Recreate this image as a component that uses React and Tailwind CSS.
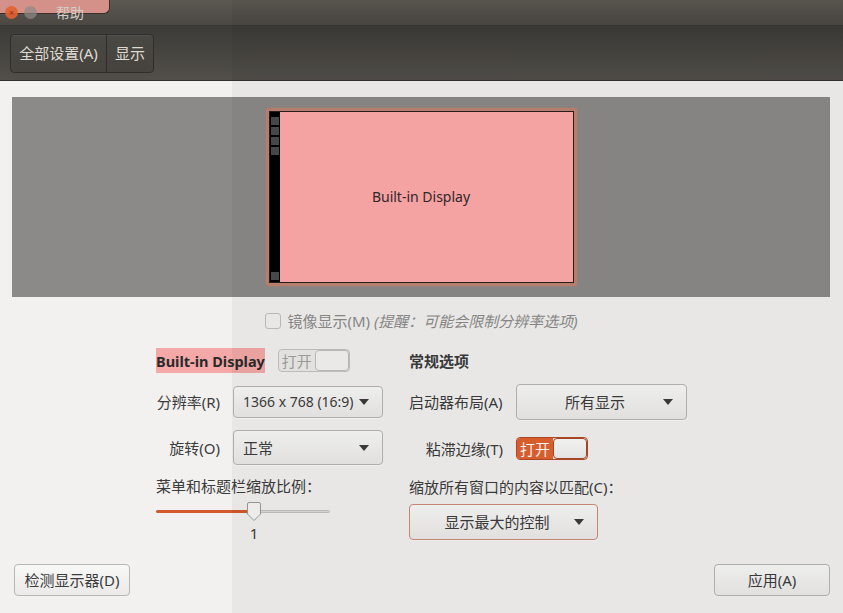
const font = "font-['Noto_Sans','Noto_Sans_CJK_SC',sans-serif]";

function Arrow() {
  return (
    <svg width="10" height="6" viewBox="0 0 10 6" className="shrink-0">
      <path d="M0 0 L10 0 L5 6 Z" fill="#3c3c3c" />
    </svg>
  );
}

function Dropdown({ text, w, h, center, focus, small }) {
  return (
    <div
      className={`flex items-center rounded-[4px] border bg-gradient-to-b from-[#f8f8f7] to-[#ebeae8] text-[#3c3c3c] shadow-[0_1px_0_rgba(255,255,255,0.6)] ${
        small ? "text-[14px]" : "text-[15px]"
      } ${focus ? "border-[#cf8a78]" : "border-[#b8b6b1]"} ${w} ${h}`}
    >
      <span className={center ? "flex-1 text-center pl-[10px]" : "flex-1 pl-[9px]"}>{text}</span>
      <span className="pr-[13px]">
        <Arrow />
      </span>
    </div>
  );
}

function Switch({ on }) {
  if (on) {
    return (
      <div className="flex h-[23px] w-[72px] overflow-hidden rounded-[4px] border border-[#b24a24]">
        <div className="flex w-[36px] items-center justify-center bg-[#e0612f] text-[15px] text-white">打开</div>
        <div className="flex-1 rounded-[4px] border border-[#a5482a] bg-gradient-to-b from-[#fbfbfa] to-[#eeedeb]" />
      </div>
    );
  }
  return (
    <div className="flex h-[23px] w-[72px] overflow-hidden rounded-[4px] border border-[#c4c2be] bg-[#ecebe9]">
      <div className="flex w-[36px] items-center justify-center text-[15px] text-[#a3a19d]">打开</div>
      <div className="flex-1 rounded-[4px] border border-[#c0beba] bg-[#f4f3f2]" />
    </div>
  );
}

export default function App() {
  return (
    <div className={`relative h-[613px] w-[843px] overflow-hidden bg-[#f2f1f0] ${font}`}>
      {/* title bar */}
      <div className="relative h-[25px] bg-gradient-to-b from-[#5c5852] to-[#4b4843]">
        <div className="absolute left-0 top-0 h-[14px] w-[110px] rounded-br-[6px] border-b border-r border-[#3a2f2c] bg-[#d4918a]" />
        <div className="relative flex items-center gap-[6px] pl-[5px] pt-[4px]">
          <div className="flex h-[13px] w-[13px] items-center justify-center rounded-full bg-[#e4602f]/90 text-[9px] leading-none text-[#8a3418]">×</div>
          <div className="flex h-[13px] w-[13px] items-center justify-center rounded-full bg-[#8f8a86]/70 text-[9px] leading-none text-[#6a6662]">–</div>
          <span className="ml-[13px] mt-[2px] text-[14px] leading-none text-[#d3cdc6]">帮助</span>
        </div>
      </div>

      {/* toolbar */}
      <div className="flex h-[56px] items-center border-b border-t border-b-[#33312e] border-t-[#3a3834] bg-gradient-to-b from-[#3d3b37] to-[#524f4a] px-[10px]">
        <div className="flex h-[39px] overflow-hidden rounded-[4px] border border-[#302e2b] bg-gradient-to-b from-[#4a4843] to-[#46433f] text-[15px] text-[#dfdbd2] shadow-[inset_0_1px_0_rgba(255,255,255,0.06)]">
          <div className="flex w-[96px] items-center justify-center border-r border-[#2f2d2a]">全部设置(A)</div>
          <div className="flex w-[46px] items-center justify-center">显示</div>
        </div>
      </div>

      {/* preview */}
      <div className="px-[12px] pt-[16px]">
        <div className="flex h-[200px] w-[818px] items-center justify-center bg-[#8b8a89]">
          <div className="rounded-[2px] bg-[#bd8370] p-[3px] shadow-[0_0_2px_#bd8370]">
            <div className="relative flex h-[172px] w-[305px] border border-[#2a1e1e] bg-[#fea9a9]">
              <div className="flex w-[10px] flex-col justify-between bg-black px-[1px] pb-[2px] pt-[5px]">
                <div className="flex flex-col gap-[2px]">
                  <div className="h-[8px] bg-[#4a4a4a]" />
                  <div className="h-[8px] bg-[#4a4a4a]" />
                  <div className="h-[8px] bg-[#4a4a4a]" />
                  <div className="h-[8px] bg-[#4a4a4a]" />
                </div>
                <div className="h-[8px] bg-[#4a4a4a]" />
              </div>
              <div className="-ml-[10px] flex flex-1 items-center justify-center pb-[1px] text-[14px] text-[#35282a]">Built-in Display</div>
            </div>
          </div>
        </div>
      </div>

      {/* mirror */}
      <div className="mt-[14px] flex h-[20px] items-center justify-center gap-[6px] text-[15px] leading-[20px] text-[#8c8b89]">
        <div className="h-[16px] w-[16px] rounded-[3px] border border-[#c2c0bc] bg-[#f2f1f0]" />
        <span>
          镜像显示(M) <i>(提醒：可能会限制分辨率选项)</i>
        </span>
      </div>

      {/* settings */}
      <div className="mt-[17px] flex justify-center gap-[26px] text-[15px] leading-[20px] text-[#3c3c3c]">
        <div className="flex w-[227px] flex-col">
          <div className="flex h-[25px] items-center">
            <span className="flex h-[25px] items-center bg-[#f4a9a8] text-[14.5px] font-bold text-[#2a2a2a]">Built-in Display</span>
            <span className="ml-[13px]">
              <Switch />
            </span>
          </div>
          <div className="mt-[13px] flex items-center gap-[13px]">
            <span className="w-[64px] whitespace-nowrap text-right">分辨率(R)</span>
            <Dropdown text="1366 x 768 (16:9)" w="w-[150px]" h="h-[32px]" small />
          </div>
          <div className="mt-[12px] flex items-center gap-[13px]">
            <span className="w-[64px] whitespace-nowrap text-right">旋转(O)</span>
            <Dropdown text="正常" w="w-[150px]" h="h-[35px]" />
          </div>
          <div className="mt-[11px] h-[20px] whitespace-nowrap">菜单和标题栏缩放比例：</div>
          <div className="relative mt-[6px] flex h-[19px] w-[174px] items-center">
            <div className="h-[3px] w-[98px] rounded-l-full bg-[#d4592c]" />
            <div className="h-[3px] flex-1 rounded-r-full border border-[#c2c0bc] bg-[#dcdbd8]" />
            <svg width="14" height="19" viewBox="0 0 14 19" className="absolute left-[91px] top-0">
              <path d="M2 0.5 H12 Q13.5 0.5 13.5 2 V12 L7 18.5 L0.5 12 V2 Q0.5 0.5 2 0.5 Z" fill="#f6f6f5" stroke="#9c9a96" />
            </svg>
          </div>
          <div className="mt-[3px] w-[196px] text-center leading-[18px]">1</div>
        </div>

        <div className="flex w-[278px] flex-col">
          <div className="flex h-[25px] items-center font-bold">常规选项</div>
          <div className="mt-[11px] flex items-center gap-[13px]">
            <span className="w-[94px] whitespace-nowrap">启动器布局(A)</span>
            <Dropdown text="所有显示" w="w-[171px]" h="h-[36px]" center />
          </div>
          <div className="mt-[17px] flex items-center gap-[13px]">
            <span className="w-[94px] whitespace-nowrap text-right">粘滞边缘(T)</span>
            <Switch on />
          </div>
          <div className="mt-[17px] h-[20px] whitespace-nowrap">缩放所有窗口的内容以匹配(C)：</div>
          <div className="mt-[7px]">
            <Dropdown text="显示最大的控制" w="w-[189px]" h="h-[36px]" center focus />
          </div>
        </div>
      </div>

      {/* bottom buttons */}
      <div className="mt-[22px] flex justify-between pl-[14px] pr-[13px] text-[15px] text-[#3c3c3c]">
        <div className="flex h-[32px] w-[116px] items-center justify-center rounded-[4px] border border-[#b8b6b1] bg-gradient-to-b from-[#f8f8f7] to-[#ebeae8]">检测显示器(D)</div>
        <div className="flex h-[32px] w-[116px] items-center justify-center rounded-[4px] border border-[#b8b6b1] bg-gradient-to-b from-[#f8f8f7] to-[#ebeae8]">应用(A)</div>
      </div>

      {/* shade over right part */}
      <div className="pointer-events-none absolute bottom-0 left-[232px] right-0 top-0 bg-black/[0.04]" />
    </div>
  );
}
